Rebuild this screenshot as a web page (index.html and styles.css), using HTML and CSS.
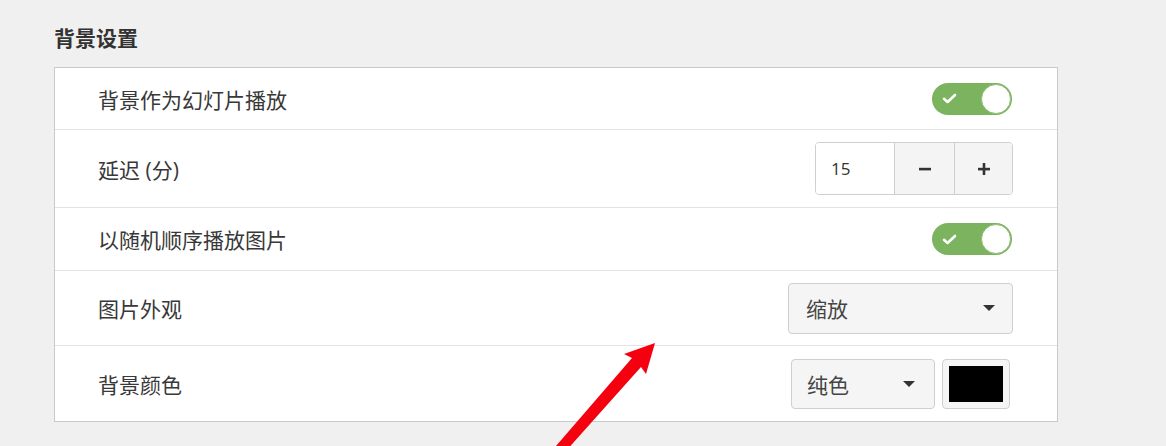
FILE: index.html
```html
<!DOCTYPE html>
<html lang="zh">
<head>
<meta charset="utf-8">
<link rel="stylesheet" href="styles.css">
</head>
<body>
<div class="page">
  <h2 class="title">背景设置</h2>
  <div class="panel">
    <div class="row row-toggle">
      <span class="label">背景作为幻灯片播放</span>
      <div class="toggle"><svg class="check" viewBox="0 0 15 11" width="15" height="11"><path d="M2 5.8 L5.6 9 L13 2" fill="none" stroke="#fff" stroke-width="2.6" stroke-linecap="round" stroke-linejoin="round"/></svg><span class="knob"></span></div>
    </div>
    <div class="row row-spin">
      <span class="label">延迟 (分)</span>
      <div class="spinner">
        <span class="spin-input">15</span>
        <span class="spin-btn"><svg viewBox="0 0 14 14" width="14" height="14"><rect x="1" y="5.8" width="12" height="2.6" fill="#333"/></svg></span>
        <span class="spin-btn last"><svg viewBox="0 0 14 14" width="14" height="14"><rect x="1" y="5.8" width="12" height="2.6" fill="#333"/><rect x="5.7" y="1" width="2.6" height="12" fill="#333"/></svg></span>
      </div>
    </div>
    <div class="row row-toggle2">
      <span class="label">以随机顺序播放图片</span>
      <div class="toggle"><svg class="check" viewBox="0 0 15 11" width="15" height="11"><path d="M2 5.8 L5.6 9 L13 2" fill="none" stroke="#fff" stroke-width="2.6" stroke-linecap="round" stroke-linejoin="round"/></svg><span class="knob"></span></div>
    </div>
    <div class="row row-select">
      <span class="label">图片外观</span>
      <div class="select wide"><span>缩放</span><span class="caret"></span></div>
    </div>
    <div class="row row-last">
      <span class="label">背景颜色</span>
      <div class="controls">
        <div class="select narrow"><span>纯色</span><span class="caret"></span></div>
        <div class="swatch"><span class="swatch-fill"></span></div>
      </div>
    </div>
  </div>
</div>
<svg class="arrow" width="1166" height="446" viewBox="0 0 1166 446">
  <polygon points="553,452 565,452 641,367 646,374 655,343 624,354 632,358 556,446" fill="#f5000e"/>
</svg>
</body>
</html>
```

FILE: styles.css
```css
html, body {
  margin: 0;
  padding: 0;
  background: #f0f0f0;
  width: 1166px;
  height: 446px;
  overflow: hidden;
  font-family: "Open Sans", "Noto Sans CJK SC", sans-serif;
  color: #333;
}
.page {
  padding: 26px 0 0 54px;
}
.title {
  margin: 0 0 17px 0;
  font-size: 21px;
  line-height: 24px;
  font-weight: bold;
  color: #333;
}
.panel {
  width: 1002px;
  background: #fff;
  border: 1px solid #c9c9c9;
}
.row {
  display: flex;
  align-items: center;
  justify-content: space-between;
  padding: 0 44px 0 43px;
  border-bottom: 1px solid #e3e3e3;
  box-sizing: border-box;
}
.row-toggle { height: 62px; }
.row-spin { height: 78px; }
.row-toggle2 { height: 63px; }
.row-select { height: 75px; }
.row-last { height: 75px; border-bottom: none; }
.label {
  font-size: 21px;
  color: #383838;
}
.toggle {
  position: relative;
  width: 80px;
  height: 32px;
  margin-right: 1px;
  border-radius: 16px;
  background: #7bb35e;
  display: flex;
  align-items: center;
}
.check {
  margin-left: 10px;
}
.knob {
  position: absolute;
  right: 1px;
  top: 1px;
  width: 28px;
  height: 28px;
  border-radius: 50%;
  background: #fff;
  border: 1px solid #8dbd73;
}
.spinner {
  display: flex;
  height: 53px;
  border: 1px solid #cfcfcf;
  border-radius: 4px;
  box-sizing: border-box;
  overflow: hidden;
}
.spin-input {
  width: 78px;
  display: flex;
  align-items: center;
  padding-left: 15px;
  box-sizing: border-box;
  font-size: 17px;
  color: #333;
  background: #fff;
}
.spin-btn {
  width: 59px;
  display: flex;
  align-items: center;
  justify-content: center;
  background: #f4f4f4;
  border-left: 1px solid #cfcfcf;
}
.spin-btn.last { width: 57px; }
.select {
  display: flex;
  align-items: center;
  justify-content: space-between;
  height: 51px;
  box-sizing: border-box;
  border: 1px solid #cfcfcf;
  border-radius: 4px;
  background: #f5f5f5;
  font-size: 21px;
  color: #444;
  padding: 0 17px 0 17px;
}
.select.wide { width: 225px; }
.select.narrow { width: 144px; height: 50px; padding-left: 15px; padding-right: 19px; }
.caret {
  width: 0;
  height: 0;
  border-left: 6px solid transparent;
  border-right: 6px solid transparent;
  border-top: 6px solid #333;
}
.controls {
  display: flex;
  align-items: center;
  gap: 7px;
  margin-right: 3px;
}
.swatch {
  width: 68px;
  height: 50px;
  box-sizing: border-box;
  border: 1px solid #cfcfcf;
  border-radius: 4px;
  background: #f5f5f5;
  display: flex;
  align-items: center;
  justify-content: center;
}
.swatch-fill {
  width: 54px;
  height: 36px;
  background: #000;
}
.arrow {
  position: absolute;
  left: 0;
  top: 0;
  pointer-events: none;
}
```
